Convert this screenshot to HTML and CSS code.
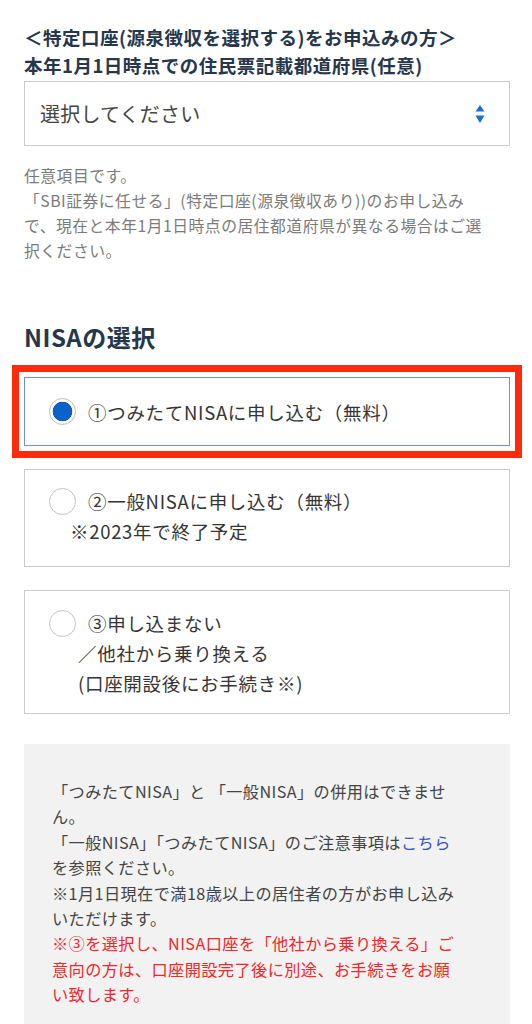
FILE: index.html
```html
<!DOCTYPE html>
<html lang="ja">
<head>
<meta charset="utf-8">
<title>NISAの選択</title>
<link rel="stylesheet" href="styles.css">
</head>
<body>
<main class="page">
  <h2 class="field-title">＜特定口座(源泉徴収を選択する)をお申込みの方＞<br>本年1月1日時点での住民票記載都道府県(任意)</h2>
  <div class="select">
    <span class="select-text">選択してください</span>
    <svg class="select-arrows" width="10" height="20" viewBox="0 0 10 20" aria-hidden="true">
      <path d="M5 1 L9.5 7.5 L0.5 7.5 Z" fill="#1b6fd3"/>
      <path d="M0.5 11.5 L9.5 11.5 L5 19 Z" fill="#1b6fd3"/>
    </svg>
  </div>
  <p class="note">任意項目です。<br>「SBI証券に任せる」(特定口座(源泉徴収あり))のお申し込み<br>で、現在と本年1月1日時点の居住都道府県が異なる場合はご選<br>択ください。</p>

  <h2 class="section-title">NISAの選択</h2>

  <div class="options">
    <label class="option option-selected">
      <span class="option-row"><span class="radio radio-on"></span><span class="option-label">①つみたてNISAに申し込む（無料）</span></span>
    </label>
    <label class="option option-two">
      <span class="option-row"><span class="radio"></span><span class="option-label">②一般NISAに申し込む（無料）</span></span>
      <span class="option-sub sub-two">※2023年で終了予定</span>
    </label>
    <label class="option option-three">
      <span class="option-row"><span class="radio"></span><span class="option-label">③申し込まない</span></span>
      <span class="option-sub sub-three">／他社から乗り換える</span>
      <span class="option-sub sub-three">(口座開設後にお手続き※)</span>
    </label>
  </div>

  <div class="info">
    <p class="info-text">「つみたてNISA」と 「一般NISA」の併用はできませ<br>ん。<br>「一般NISA」「つみたてNISA」のご注意事項は<a class="info-link" href="#">こちら</a><br>を参照ください。<br>※1月1日現在で満18歳以上の居住者の方がお申し込み<br>いただけます。<br><span class="info-warn">※③を選択し、NISA口座を「他社から乗り換える」ご<br>意向の方は、口座開設完了後に別途、お手続きをお願<br>い致します。</span></p>
  </div>
</main>
</body>
</html>
```

FILE: styles.css
```css
html, body {
  margin: 0;
  padding: 0;
  background: #ffffff;
}

body {
  font-family: "Noto Sans CJK JP", "Noto Sans", sans-serif;
  color: #333333;
}

.page {
  padding: 23px 22px 0 24px;
  display: flex;
  flex-direction: column;
}

.field-title {
  margin: 0;
  font-size: 18.5px;
  line-height: 28px;
  font-weight: 700;
  letter-spacing: 0.5px;
  color: #26364b;
  white-space: nowrap;
}

.select {
  margin-top: 2px;
  height: 65px;
  box-sizing: border-box;
  border: 1px solid #c9cbcd;
  display: flex;
  align-items: center;
  justify-content: space-between;
  padding: 0 24px 0 15px;
}

.select-text {
  font-size: 20px;
  letter-spacing: 0.2px;
  color: #454545;
}

.select-arrows {
  display: block;
}

.note {
  margin: 17px 0 0;
  font-size: 15.8px;
  line-height: 25px;
  letter-spacing: 0.5px;
  color: #7b7b7b;
  white-space: nowrap;
}

.section-title {
  margin: 57px 0 0;
  font-size: 24px;
  line-height: 34px;
  font-weight: 700;
  letter-spacing: 0.5px;
  color: #26364b;
}

.options {
  margin-top: 23px;
  display: flex;
  flex-direction: column;
  gap: 23px;
}

.option {
  display: flex;
  flex-direction: column;
  border: 1px solid #c9cbcd;
  padding: 16px 24px 20px;
  font-size: 18.5px;
  line-height: 30px;
  letter-spacing: 0.7px;
  color: #353535;
}

.option-selected {
  border-color: #6b8fe3;
  padding: 18.5px 24px;
  outline: 7px solid #fd2a0c;
  outline-offset: 5px;
}

.option-three {
  padding: 17px 24px 15px;
}

.option-row {
  display: flex;
  align-items: center;
  gap: 12px;
}

.radio {
  width: 27px;
  height: 27px;
  box-sizing: border-box;
  border: 1.5px solid #c3c3c3;
  border-radius: 50%;
  background: #ffffff;
  flex: none;
}

.radio-on {
  border-color: #bdbdbd;
  background: radial-gradient(circle, #0b63c9 0 9.5px, #ffffff 10.1px);
}

.option-sub {
  display: block;
}

.sub-two {
  padding-left: 21px;
}

.sub-three {
  padding-left: 29px;
}

.info {
  margin-top: 30px;
  background: #f2f2f2;
  padding: 35px 20px 36px 28px;
}

.info-text {
  margin: 0;
  font-size: 16.2px;
  line-height: 25.4px;
  letter-spacing: 0.4px;
  color: #444444;
  white-space: nowrap;
}

.info-link {
  color: #3553c1;
  text-decoration: none;
}

.info-warn {
  color: #f2262a;
}
```
